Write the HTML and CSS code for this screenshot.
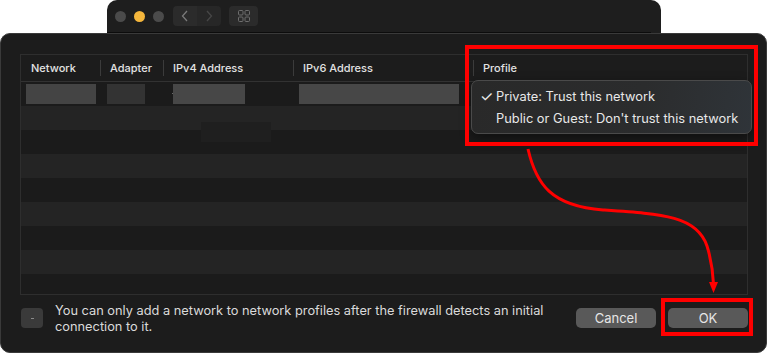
FILE: index.html
```html
<!DOCTYPE html>
<html lang="en">
<head>
  <meta charset="UTF-8">
  <meta name="viewport" content="width=device-width, initial-scale=1.0">
  <title>Network Profiles</title>
  <link rel="stylesheet" href="styles.css">
</head>
<body>
  <div class="backwin">
    <div class="toolbar">
      <span class="light"></span>
      <span class="light yellow"></span>
      <span class="light"></span>
      <div class="seg">
        <span class="seg-btn">
          <svg width="8" height="12" viewBox="0 0 8 12"><path d="M6 1 L1.5 6 L6 11" fill="none" stroke="#7a7a7a" stroke-width="1.3"/></svg>
        </span>
        <span class="seg-btn off">
          <svg width="8" height="12" viewBox="0 0 8 12"><path d="M2 1 L6.5 6 L2 11" fill="none" stroke="#474747" stroke-width="1.3"/></svg>
        </span>
      </div>
      <span class="grid-btn">
        <svg width="12" height="12" viewBox="0 0 12 12" fill="none" stroke="#6e6e6e" stroke-width="1">
          <rect x="0.5" y="0.5" width="4.5" height="4.5" rx="1"/>
          <rect x="7" y="0.5" width="4.5" height="4.5" rx="1"/>
          <rect x="0.5" y="7" width="4.5" height="4.5" rx="1"/>
          <rect x="7" y="7" width="4.5" height="4.5" rx="1"/>
        </svg>
      </span>
    </div>
  </div>

  <div class="dialog">
    <div class="table">
      <div class="thead">
        <div class="th c1">Network</div>
        <div class="th c2 sep">Adapter</div>
        <div class="th c3 sep">IPv4 Address</div>
        <div class="th c4 sep">IPv6 Address</div>
        <div class="th c5 sep">Profile</div>
      </div>
      <div class="tbody">
        <div class="row">
          <div class="cell c1"><span class="blur b1"></span></div>
          <div class="cell c2"><span class="blur b2"></span></div>
          <div class="cell c3"><span class="dot"></span><span class="blur b3"></span></div>
          <div class="cell c4"><span class="blur b4"></span></div>
          <div class="cell c5"></div>
        </div>
        <div class="row alt"></div>
        <div class="row"></div>
        <div class="row alt"></div>
        <div class="row"></div>
        <div class="row alt"></div>
        <div class="row"></div>
        <div class="row alt"></div>
        <div class="row"></div>
        <span class="patch"></span>
      </div>
    </div>

    <div class="footer">
      <span class="help"><span class="help-mark"></span></span>
      <p class="note">You can only add a network to network profiles after the firewall detects an initial<br>connection to it.</p>
      <div class="actions">
        <button class="btn">Cancel</button>
        <button class="btn">OK</button>
      </div>
    </div>

    <div class="menu">
      <div class="item"><span class="check">✓</span>Private: Trust this network</div>
      <div class="item"><span class="check"></span>Public or Guest: Don't trust this network</div>
    </div>
  </div>

  <svg class="marks" width="767" height="354" viewBox="0 0 767 354">
    <rect x="467" y="47" width="289" height="97" fill="none" stroke="#ff0000" stroke-width="4"/>
    <rect x="663" y="300" width="88" height="34" fill="none" stroke="#ff0000" stroke-width="4"/>
    <path d="M528 149 C536 184 551 206 603 210 C663 214 697 216 707 246 C712 262 713 274 713.5 284" fill="none" stroke="#ff0000" stroke-width="3"/>
    <polygon points="709,282 718,282 713.5,293" fill="#ff0000"/>
  </svg>
</body>
</html>
```

FILE: styles.css
```css
body {
  margin: 0;
  width: 767px;
  height: 354px;
  overflow: hidden;
  background: #ffffff;
  font-family: 'Inter', 'Noto Sans', sans-serif;
  position: relative;
}
.backwin {
  margin-left: 107px;
  width: 554px;
  height: 33px;
  background: #1e1e1e;
  border-radius: 10px 10px 0 0;
  box-sizing: border-box;
}
.toolbar {
  height: 32px;
  display: flex;
  align-items: center;
  padding-left: 8px;
  margin-right: 10px;
  border-bottom: 1px solid #0c0c0c;
}
.light {
  width: 11px;
  height: 11px;
  border-radius: 50%;
  background: #4b4b4b;
  margin-right: 8px;
}
.light.yellow {
  background: #f4b63c;
}
.seg {
  display: flex;
  margin-left: 1px;
  height: 20px;
}
.seg-btn {
  width: 24px;
  height: 20px;
  background: #2b2b2b;
  display: flex;
  align-items: center;
  justify-content: center;
}
.seg-btn:first-child {
  border-radius: 4px 0 0 4px;
}
.seg-btn.off {
  background: #272727;
  border-radius: 0 4px 4px 0;
}
.grid-btn {
  width: 29px;
  height: 20px;
  margin-left: 8px;
  background: #2b2b2b;
  border-radius: 4px;
  display: flex;
  align-items: center;
  justify-content: center;
}
.dialog {
  position: relative;
  height: 320px;
  background: #1c1c1c;
  border: 1px solid #3a3a3a;
  border-radius: 10px;
  box-sizing: border-box;
  padding: 20px 18px 0 19px;
}
.table {
  border: 1px solid #2e2e2e;
}
.thead {
  display: flex;
  height: 26px;
  border-bottom: 1px solid #323232;
  color: #e2e2e2;
  font-size: 11px;
  font-weight: 500;
}
.th {
  position: relative;
  display: flex;
  align-items: center;
  padding-left: 10px;
  box-sizing: border-box;
}
.sep::before {
  content: "";
  position: absolute;
  left: 0;
  top: 5px;
  bottom: 5px;
  width: 1px;
  background: #3b3b3b;
}
.c1 { width: 79px; }
.c2 { width: 63px; }
.c3 { width: 130px; }
.c4 { width: 180px; }
.c5 { flex: 1; }
.tbody {
  position: relative;
  height: 212px;
  overflow: hidden;
}
.row {
  display: flex;
  height: 24px;
  background: #1b1b1b;
}
.row.alt {
  background: #242424;
}
.cell {
  display: flex;
  align-items: flex-start;
  padding-top: 2px;
  box-sizing: border-box;
}
.blur {
  display: block;
  height: 20px;
  background: #474747;
}
.b1 { margin-left: 5px; width: 70px; background: #444444; }
.b2 { margin-left: 7px; width: 38px; background: #333333; }
.b3 { width: 72px; }
.b4 { margin-left: 6px; width: 160px; }
.dot {
  width: 1px;
  height: 1px;
  margin: 9px 0 0 9px;
  background: #6a6a6a;
}
.patch {
  position: absolute;
  left: 180px;
  top: 40px;
  width: 70px;
  height: 20px;
  background: #1f1f1f;
}
.footer {
  display: flex;
  align-items: flex-start;
  padding-top: 13px;
}
.help {
  width: 22px;
  height: 20px;
  margin-left: 1px;
  border-radius: 4px;
  background: #3a3a3a;
  display: flex;
  align-items: center;
  justify-content: center;
}
.help-mark {
  width: 3px;
  height: 1px;
  background: #8a8a8a;
}
.note {
  margin: -5px 0 0 12px;
  font-size: 12.8px;
  line-height: 15.5px;
  color: #dadada;
}
.actions {
  margin-left: auto;
  display: flex;
  gap: 12px;
}
.btn {
  width: 80px;
  height: 20px;
  padding: 0;
  border: none;
  border-radius: 5px;
  background: #595959;
  color: #e6e6e6;
  font-family: inherit;
  font-size: 13px;
}
.menu {
  position: absolute;
  left: 470px;
  top: 46px;
  width: 281px;
  height: 54px;
  box-sizing: border-box;
  padding: 4px 0;
  border: 1px solid #4a4a4a;
  border-radius: 7px;
  background: linear-gradient(100deg, #292929 0%, #2b2c2d 60%, #2f3439 100%);
  box-shadow: 0 4px 12px rgba(0, 0, 0, 0.45);
  color: #e8e8e8;
  font-size: 12.85px;
}
.item {
  display: flex;
  align-items: center;
  height: 22px;
}
.check {
  width: 16px;
  padding-left: 8px;
  font-size: 15px;
  line-height: 1;
}
.marks {
  position: absolute;
  left: 0;
  top: 0;
  pointer-events: none;
}
```
